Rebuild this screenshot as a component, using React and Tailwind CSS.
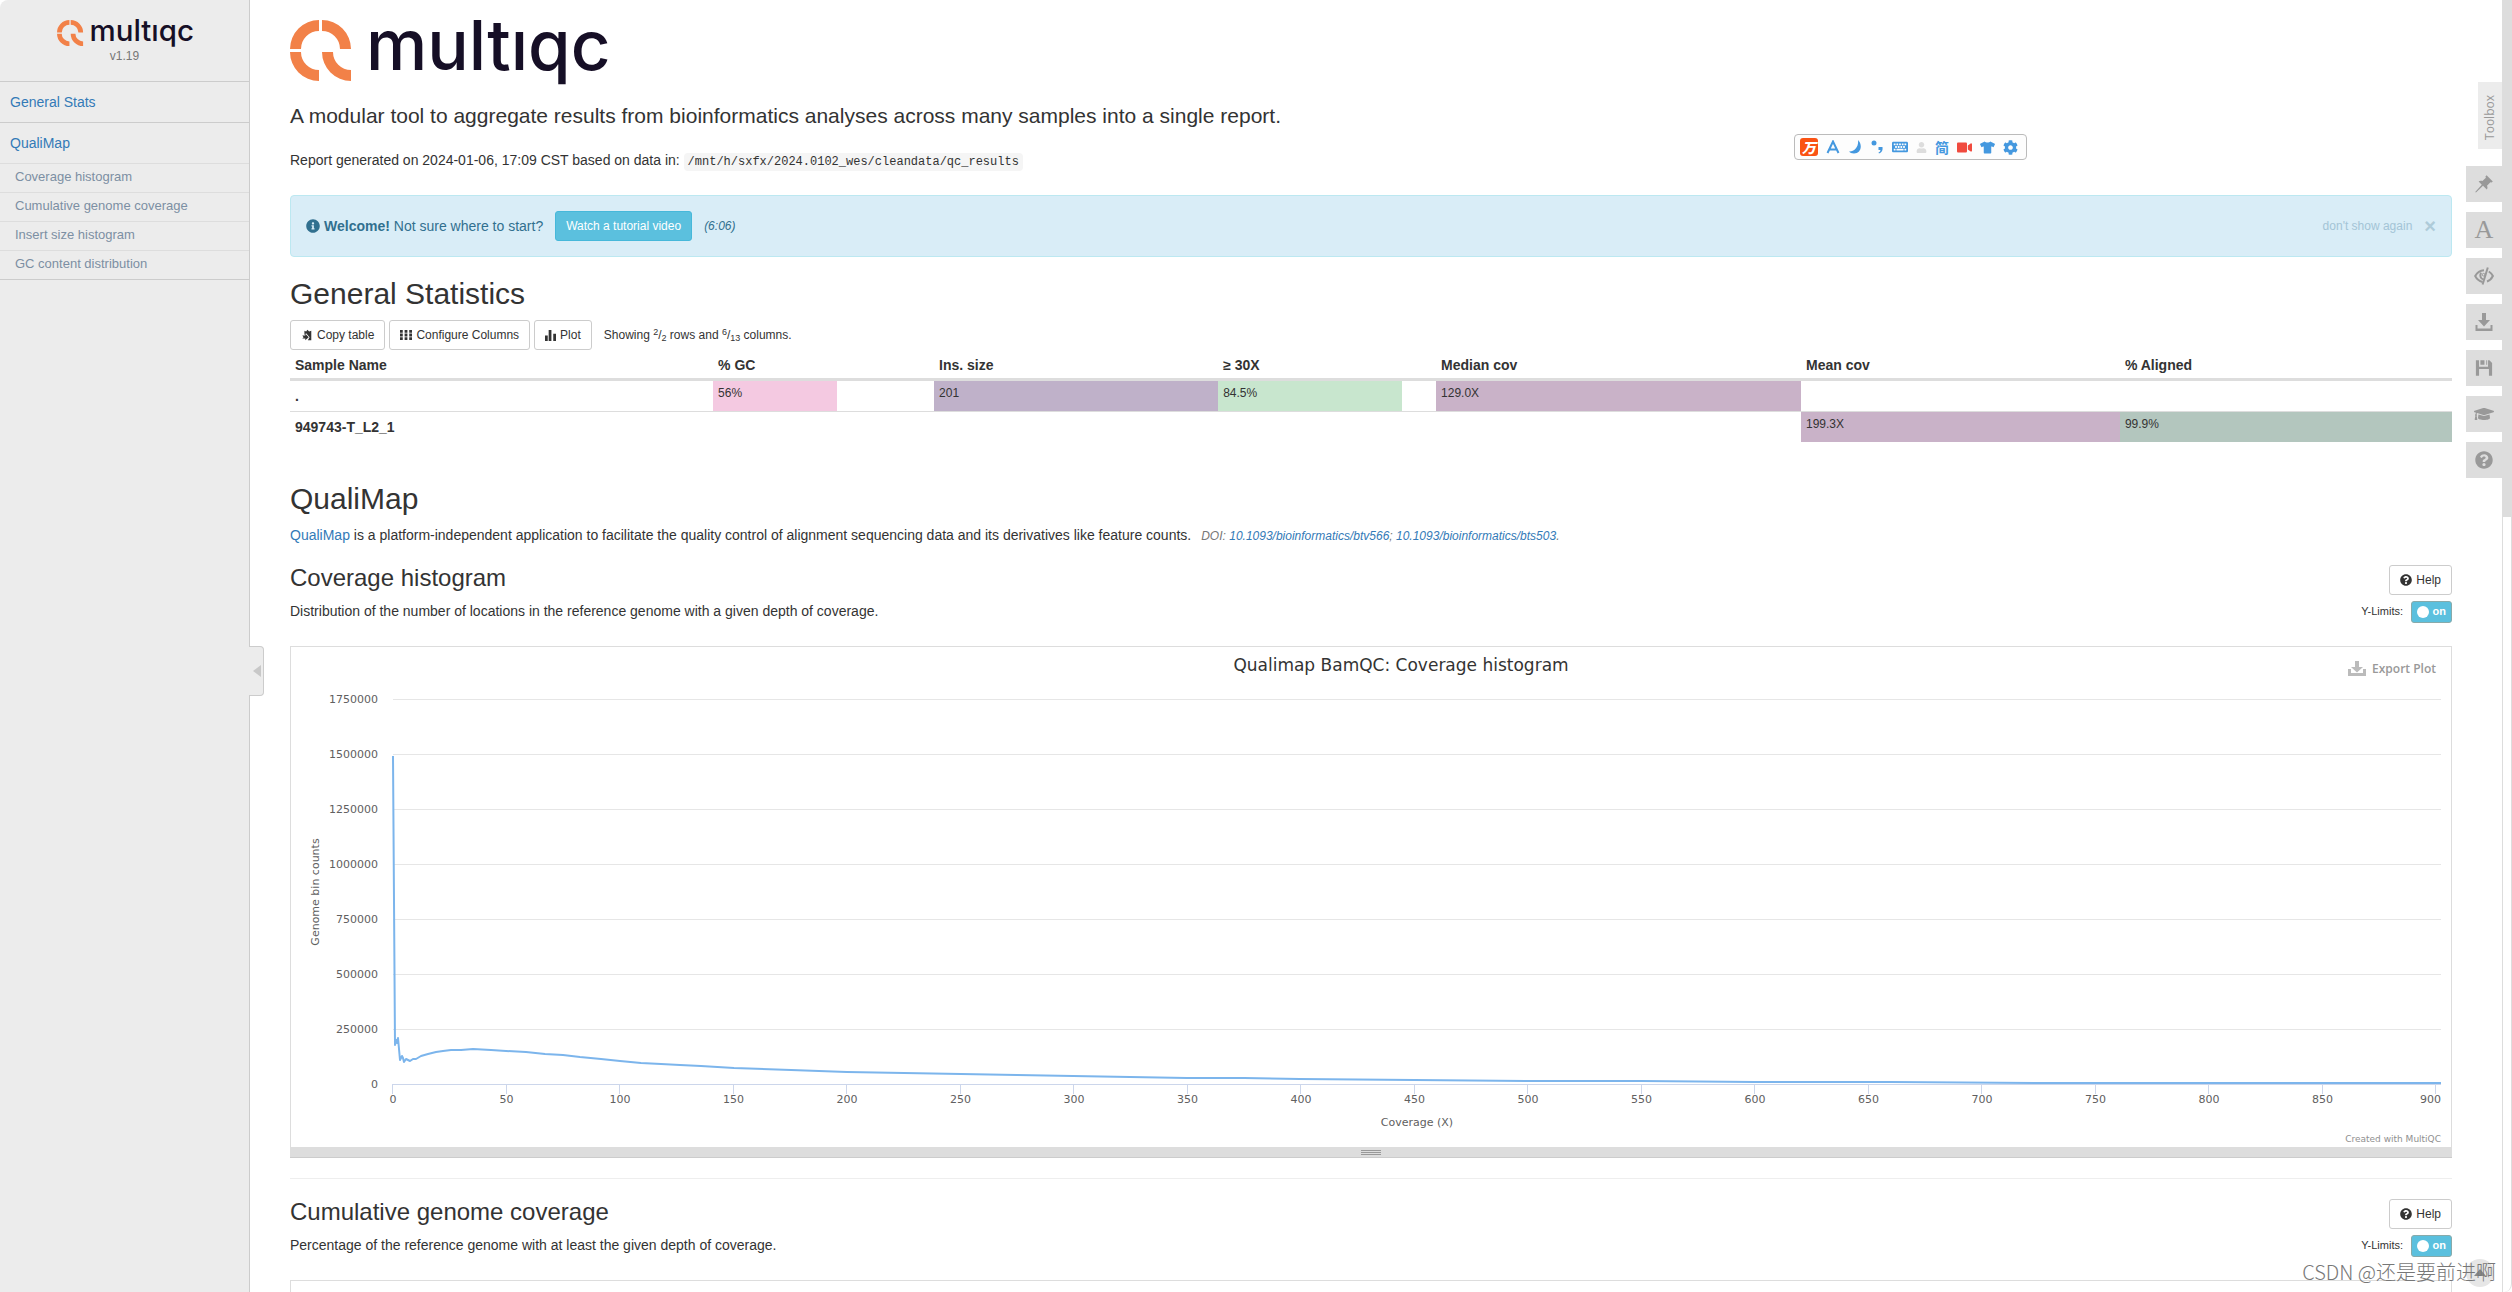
import React, { useState } from 'react';
import { FaInfoCircle, FaQuestionCircle, FaGraduationCap, FaTshirt, FaUser, FaKeyboard, FaVideo, FaCog } from 'react-icons/fa';

const navItems = ['Coverage histogram', 'Cumulative genome coverage', 'Insert size histogram', 'GC content distribution'];

const columns = [
  { title: 'Sample Name', width: '19.57%' },
  { title: '% GC', width: '10.22%' },
  { title: 'Ins. size', width: '13.14%' },
  { title: '≥ 30X', width: '10.08%' },
  { title: 'Median cov', width: '16.88%' },
  { title: 'Mean cov', width: '14.75%' },
  { title: '% Aligned', width: '15.36%' },
];

const rows = [
  {
    name: '.',
    cells: [
      { text: '56%', bar: 56, color: 'bg-[#f4c9e1]' },
      { text: '201', bar: 100, color: 'bg-[#bfb1c9]' },
      { text: '84.5%', bar: 84.5, color: 'bg-[#c8e6ce]' },
      { text: '129.0X', bar: 100, color: 'bg-[#c9b2c8]' },
      null,
      null,
    ],
  },
  {
    name: '949743-T_L2_1',
    cells: [
      null,
      null,
      null,
      null,
      { text: '199.3X', bar: 100, color: 'bg-[#c9b2c8]' },
      { text: '99.9%', bar: 100, color: 'bg-[#b3c6be]' },
    ],
  },
];

// points of the coverage line, in chart units
const coverageLine =
  '102,109 104,398 105,393 106,396 107,391 109,413 111,409 112,411 113,415 115,412 117,413 119,414 122,412 125,412 130,409 137,407 145,405 152,404 160,403 170,403 182,402 200,403 215,404 235,405 254,407 272,408 289,410 310,412 329,414 350,416 370,417 389,418 410,419 443,421 500,423 556,425 613,426 670,427 726,428 782,429 839,430 896,431 953,431 1009,432 1123,433 1236,434 1350,434 1463,435 1600,435 1750,436 1950,436 2150,436';

const yTicks = [1750000, 1500000, 1250000, 1000000, 750000, 500000, 250000, 0];
const xTicks = Array.from({ length: 19 }, (_, i) => i * 50);

const Logo = ({ className }) => (
  <svg viewBox="0 0 318 61" className={`overflow-visible ${className}`} role="img" aria-label="multiqc">
    <g fill="#f28148">
      <path d="M0 29A29 29 0 0 1 29 0V11A18 18 0 0 0 11 29Z" />
      <path d="M32 0A29 29 0 0 1 61 29H50A18 18 0 0 0 32 11Z" />
      <path d="M0 32A29 29 0 0 0 29 61V50A18 18 0 0 1 11 32Z" />
      <path d="M32 32H43A18 18 0 0 0 61 50V61A29 29 0 0 1 32 32Z" />
    </g>
    <text x="76" y="50" fontSize="69" fontWeight="500" fill="#160f26" className="font-['Inter',sans-serif]">
      multıqc
    </text>
  </svg>
);

const PinIcon = ({ className }) => (
  <svg viewBox="0 0 20 20" className={className} fill="currentColor">
    <path d="M12.6 1.2L18.8 7.4L17.6 8.6L16.4 8.2L13 11.8C13.8 13.4 13.6 14.6 12.8 15.4L9 11.8L2 18.6L1.2 18L7.8 10.8L4.6 7.4C5.6 6.6 7 6.4 8.4 7L11.9 3.7L11.4 2.4Z" />
  </svg>
);

const EyeCloseIcon = ({ className }) => (
  <svg viewBox="0 0 20 20" className={className} fill="none" stroke="currentColor" strokeWidth="2">
    <path d="M8.5 16C5 15 2.5 12.6 1.2 10C3 6.5 6 4.3 10 4.2" />
    <path d="M14.8 5.5C16.8 6.8 18 8.3 18.9 10C17.6 12.6 15.6 14.6 13 15.5" />
    <path d="M9.6 13.5C6.5 13 5.6 9.5 7 6.6" />
    <circle cx="9.6" cy="8.7" r="1.3" strokeWidth="1" />
    <path d="M13.8 1.5L8.6 18.5" />
  </svg>
);

const SaveTrayIcon = ({ className }) => (
  <svg viewBox="0 0 20 20" className={className} fill="currentColor">
    <path d="M8 1H12V8H16L10 14.5L4 8H8Z" />
    <path d="M1.5 13H3.5V16.5H16.5V13H18.5V19H1.5Z" />
  </svg>
);

const ExportIcon = ({ className }) => (
  <svg viewBox="0 0 18 16" className={className} fill="currentColor">
    <path d="M7 0H11V6H15L9 11.5L3 6H7Z" />
    <path d="M0 8H3V12H15V8H18V15H0Z" />
  </svg>
);

const FloppyIcon = ({ className }) => (
  <svg viewBox="0 0 20 20" className={className} fill="currentColor">
    <path d="M1 1.5H4.5V8.5H14.5V1.5H16L19 4.5V18.5H15.5V11H4.5V18.5H1Z" />
    <path d="M6 1.5H10.5V6.5H6ZM12.5 1.5H13.5V6.5H12.5Z" />
  </svg>
);

const CopyIcon = ({ className }) => (
  <svg viewBox="0 0 14 14" className={className} fill="currentColor">
    <path d="M4 2L6 3L7.5 1L9.5 3L12 2V13H8L10 9.5L6 5L4 7Z" />
    <path d="M1.5 7.5H5V5.5L9 9.5L5 13V11H1.5L3 9.5Z" />
  </svg>
);

const GridIcon = ({ className }) => (
  <svg viewBox="0 0 13 13" className={className} fill="currentColor">
    <path d="M0 1H3V4H0ZM5 1H8V4H5ZM10 1H13V4H10ZM0 5H3V8H0ZM5 5H8V8H5ZM10 5H13V8H10ZM0 9H3V12H0ZM5 9H8V12H5ZM10 9H13V12H10Z" />
  </svg>
);

const StatsIcon = ({ className }) => (
  <svg viewBox="0 0 12 12" className={className} fill="currentColor">
    <path d="M0 6H3V12H0ZM4 0H7V12H4ZM9 4H12V12H9Z" />
  </svg>
);

const toolbox = [
  { label: 'Highlight samples', icon: <PinIcon className="size-5" /> },
  { label: 'Rename samples', icon: <span className="font-['Liberation_Serif',serif] text-[26px] leading-9">A</span> },
  { label: 'Hide samples', icon: <EyeCloseIcon className="size-5" /> },
  { label: 'Export plots', icon: <SaveTrayIcon className="size-5" /> },
  { label: 'Save settings', icon: <FloppyIcon className="size-[18px]" /> },
  { label: 'Tutorial', icon: <FaGraduationCap className="size-5" /> },
  { label: 'About', icon: <FaQuestionCircle className="size-[18px]" /> },
];

const SmallButton = ({ children }) => (
  <button
    type="button"
    className="flex h-[30px] items-center gap-1 rounded-[3px] border border-[#ccc] bg-white px-2.5 text-xs text-[#333] cursor-pointer hover:bg-gray-100"
  >
    {children}
  </button>
);

const PlotSection = ({ title, description, children }) => {
  const [limits, setLimits] = useState(true);

  return (
    <section className="mt-5">
      <div className="flex justify-between">
        <div>
          <h3 className="text-2xl leading-[26px]">{title}</h3>
          <p className="mt-2.5 leading-5">{description}</p>
        </div>
        <div className="flex flex-col items-end gap-1.5">
          <SmallButton>
            <FaQuestionCircle className="size-3" />
            Help
          </SmallButton>
          <div className="flex items-center gap-2 text-[11px]">
            <span>Y-Limits:</span>
            <button
              type="button"
              role="switch"
              aria-checked={limits}
              aria-label="Y-Limits"
              onClick={() => setLimits(!limits)}
              className="flex h-[22px] w-[41px] items-center gap-1 rounded-[3px] border border-[#8aa] bg-[#5bc0de] px-[5px] font-bold text-white cursor-pointer"
            >
              <span className="size-3 rounded-full bg-white"></span>
              {limits ? 'on' : 'off'}
            </button>
          </div>
        </div>
      </div>
      {children}
    </section>
  );
};

const CoverageChart = () => (
  <svg viewBox="0 0 2160 500" className="block w-full font-['DejaVu_Sans',sans-serif]" fontSize="11" fill="#606060">
    <text x="1110" y="24" textAnchor="middle" fontSize="17" fill="#333">
      Qualimap BamQC: Coverage histogram
    </text>
    {yTicks.map((tick, i) => (
      <g key={tick}>
        {tick > 0 && <path d={`M102 ${52.5 + i * 55}H2150`} stroke="#e6e6e6" />}
        <text x="87" y={56 + i * 55} textAnchor="end">
          {tick}
        </text>
      </g>
    ))}
    <path d="M101 437.5H2150" stroke="#ccd6eb" />
    {xTicks.map((tick, i) => (
      <g key={tick}>
        <path d={`M${Math.round(101 + i * 113.5) + 0.5} 437V447`} stroke="#ccd6eb" />
        <text x={tick === 900 ? 2150 : 102 + i * 113.5} y="456" textAnchor={tick === 900 ? 'end' : 'middle'}>
          {tick}
        </text>
      </g>
    ))}
    <polyline points={coverageLine} fill="none" stroke="#7cb5ec" strokeWidth="2" strokeLinejoin="round" />
    <text x="1126" y="479" textAnchor="middle">
      Coverage (X)
    </text>
    <text transform="translate(28 245) rotate(-90)" textAnchor="middle">
      Genome bin counts
    </text>
    <text x="2150" y="495" textAnchor="end" fontSize="9" fill="#909090">
      Created with MultiQC
    </text>
  </svg>
);

const ImeBar = () => (
  <div className="absolute left-[1794px] top-[134px] flex h-[26px] items-center gap-2 rounded border border-[#bbb] bg-[#fdfdfd] pr-2 pl-[5px] text-[#4498df]">
    <span className="flex size-[18px] items-center justify-center rounded-[3px] bg-[#fa5314] text-sm font-black text-white italic font-['Noto_Sans_CJK_SC',sans-serif]">
      万
    </span>
    <svg viewBox="0 0 14 14" className="size-3.5" fill="none" stroke="currentColor" strokeWidth="2">
      <path d="M1.5 13L7 1.5L12.5 13M3.5 9.5H10.5" />
    </svg>
    <svg viewBox="0 0 14 14" className="size-3.5" fill="currentColor">
      <path d="M10 0C15 5 13 13.5 6 13.5C3.5 13.5 2 12.8 1 11.5C6 12 11 7 10 0Z" />
    </svg>
    <svg viewBox="0 0 14 14" className="size-3.5" fill="currentColor">
      <circle cx="4" cy="3" r="2.5" />
      <path d="M8.5 7H12.5C13 10 12 12.5 9 13.5L8.5 12.5C10 12 10.4 11 10.4 10H8.5Z" />
    </svg>
    <FaKeyboard className="size-4" />
    <FaUser className="size-[11px] text-[#ddd]" />
    <span className="text-sm font-bold font-['Noto_Sans_CJK_SC',sans-serif]">简</span>
    <FaVideo className="size-[15px] text-[#f04a3e]" />
    <FaTshirt className="size-[15px]" />
    <FaCog className="size-[15px]" />
  </div>
);

const App = () => {
  return (
    <div className="relative flex h-screen overflow-hidden bg-white text-sm text-[#333] font-['Liberation_Sans',Arial,sans-serif]">
      {/* side navigation */}
      <aside className="relative w-[250px] shrink-0 rounded-tl-lg border-r border-[#ccc] bg-[#ececec]">
        <div className="flex h-[82px] flex-col items-center border-b border-[#ccc] pt-5">
          <Logo className="w-[136px]" />
          <p className="mt-0.5 text-xs leading-[17px] text-[#777]">v1.19</p>
        </div>
        <nav>
          <a href="#general_stats" className="block border-b border-[#ccc] px-2.5 py-2.5 leading-5 text-[#337ab7]">
            General Stats
          </a>
          <a href="#qualimap" className="block border-b border-[#ddd] px-2.5 py-2.5 leading-5 text-[#337ab7]">
            QualiMap
          </a>
          <ul className="border-b border-[#ccc]">
            {navItems.map((item, index) => (
              <li key={item} className={index > 0 ? 'border-t border-[#ddd]' : ''}>
                <a href="#qualimap" className="block px-[15px] pt-1 pb-1.5 text-[13px] leading-[18px] text-[#7c8fa3]">
                  {item}
                </a>
              </li>
            ))}
          </ul>
        </nav>
        <button
          type="button"
          aria-label="Hide navigation"
          className="absolute top-1/2 -right-[15px] flex h-[50px] w-[15px] items-center rounded-r border border-l-0 border-[#ccc] bg-[#ececec] pl-1 cursor-pointer"
        >
          <svg viewBox="0 0 8 12" className="h-3 w-2" fill="#c8c8c8">
            <path d="M0 6L8 0V12Z" />
          </svg>
        </button>
      </aside>

      <main className="min-w-0 flex-1 pt-5 pr-[50px] pl-10">
        {/* report header */}
        <header>
          <h1>
            <Logo className="w-[318px]" />
          </h1>
          <p className="mt-[21px] text-[21px] leading-7">
            A modular tool to aggregate results from bioinformatics analyses across many samples into a single report.
          </p>
          <p className="mt-5 leading-5">
            Report generated on 2024-01-06, 17:09 CST based on data in:{' '}
            <code className="rounded bg-[#f5f5f5] px-1 py-0.5 text-xs font-['Liberation_Mono',monospace]">
              /mnt/h/sxfx/2024.0102_wes/cleandata/qc_results
            </code>
          </p>
        </header>

        {/* welcome alert */}
        <div className="mt-[25px] flex h-[62px] items-center rounded border border-[#bce8f1] bg-[#d9edf7] px-[15px] text-[#31708f]">
          <FaInfoCircle className="mr-1 size-3.5" />
          <p>
            <strong>Welcome!</strong> Not sure where to start?
          </p>
          <button
            type="button"
            className="ml-3 h-[30px] rounded-[3px] border border-[#46b8da] bg-[#5bc0de] px-2.5 text-xs text-white cursor-pointer"
          >
            Watch a tutorial video
          </button>
          <em className="ml-3 text-xs">(6:06)</em>
          <button type="button" className="ml-auto text-xs text-[#a3c4d6] cursor-pointer">
            don't show again
          </button>
          <button type="button" aria-label="Close" className="ml-3 text-xl font-bold leading-5 text-[#aecbd9] cursor-pointer">
            ×
          </button>
        </div>

        {/* general statistics */}
        <section id="general_stats" className="mt-5">
          <h2 className="text-3xl leading-[33px]">General Statistics</h2>
          <div className="mt-2.5 flex items-center gap-1">
            <SmallButton>
              <CopyIcon className="size-3" />
              Copy table
            </SmallButton>
            <SmallButton>
              <GridIcon className="size-3" />
              Configure Columns
            </SmallButton>
            <SmallButton>
              <StatsIcon className="size-[11px]" />
              Plot
            </SmallButton>
            <p className="ml-2 text-xs">
              Showing <sup>2</sup>/<sub>2</sub> rows and <sup>6</sup>/<sub>13</sub> columns.
            </p>
          </div>
          <table className="w-full table-fixed border-separate border-spacing-0">
            <thead>
              <tr>
                {columns.map((col) => (
                  <th
                    key={col.title}
                    style={{ width: col.width }}
                    className="border-b-3 border-[#ddd] px-[5px] pt-[5px] pb-[3px] text-left leading-5"
                  >
                    {col.title}
                  </th>
                ))}
              </tr>
            </thead>
            <tbody>
              {rows.map((row, index) => (
                <tr key={row.name}>
                  <th
                    className={`h-[30px] px-[5px] pt-[5px] text-left align-top leading-5 ${
                      index === 0 && 'border-b border-[#ddd]'
                    }`}
                  >
                    {row.name}
                  </th>
                  {row.cells.map((cell, i) => (
                    <td key={i} className={`p-0 align-top ${index === 0 && 'border-b border-[#ddd]'}`}>
                      {cell && (
                        <div
                          style={{ width: `${cell.bar}%` }}
                          className={`h-[30px] px-[5px] pt-1 text-xs leading-[17px] ${cell.color}`}
                        >
                          {cell.text}
                        </div>
                      )}
                    </td>
                  ))}
                </tr>
              ))}
            </tbody>
          </table>
        </section>

        {/* qualimap module */}
        <section id="qualimap" className="mt-10">
          <h2 className="text-3xl leading-[33px]">QualiMap</h2>
          <p className="mt-2.5 leading-5">
            <a href="#qualimap" className="text-[#337ab7]">QualiMap</a> is a platform-independent application to facilitate
            the quality control of alignment sequencing data and its derivatives like feature counts.
            <em className="ml-2.5 text-xs text-[#777]">
              DOI: <a href="#btv566" className="text-[#337ab7]">10.1093/bioinformatics/btv566</a>;{' '}
              <a href="#bts503" className="text-[#337ab7]">10.1093/bioinformatics/bts503</a>.
            </em>
          </p>

          <PlotSection
            title="Coverage histogram"
            description="Distribution of the number of locations in the reference genome with a given depth of coverage."
          >
            <div className="relative mt-[23px] border border-b-0 border-[#ddd]">
              <CoverageChart />
              <button
                type="button"
                className="absolute top-3.5 right-[15px] flex items-center gap-1.5 text-xs font-semibold text-[#999] cursor-pointer font-['Open_Sans',sans-serif]"
              >
                <ExportIcon className="h-4 w-[18px] text-[#bbb]" />
                Export Plot
              </button>
            </div>
            <div className="flex h-[11px] flex-col items-center justify-center gap-px border-b border-[#ccc] bg-[#ddd]">
              <span className="h-px w-5 bg-[#999]"></span>
              <span className="h-px w-5 bg-[#999]"></span>
              <span className="h-px w-5 bg-[#999]"></span>
            </div>
          </PlotSection>

          <hr className="mt-5 border-[#eee]" />

          <PlotSection
            title="Cumulative genome coverage"
            description="Percentage of the reference genome with at least the given depth of coverage."
          >
            <div className="mt-[23px] h-[500px] border border-[#ddd]"></div>
          </PlotSection>
        </section>
      </main>

      {/* scroll rail */}
      <div className="w-2.5 shrink-0 rounded-br-lg border-x border-[#ddd] bg-white">
        <div className="h-[40%] bg-[#ddd]"></div>
      </div>

      {/* toolbox tabs */}
      <div className="absolute top-[82px] right-2.5 flex flex-col items-end gap-2.5 text-[#999]">
        <button
          type="button"
          className="mb-[7px] flex h-[67px] w-6 items-center justify-center bg-[#ececec] pt-1 text-xs cursor-pointer [writing-mode:vertical-rl] font-['Open_Sans',sans-serif]"
        >
          <span className="rotate-180">Toolbox</span>
        </button>
        {toolbox.map((tool) => (
          <button
            key={tool.label}
            type="button"
            aria-label={tool.label}
            className="flex size-9 items-center justify-center bg-[#ddd] cursor-pointer"
          >
            {tool.icon}
          </button>
        ))}
      </div>

      <ImeBar />

      <button
        type="button"
        aria-label="Back to top"
        className="absolute right-[18px] bottom-[5px] flex size-7 items-center justify-center rounded-full bg-[#e6e6e6] text-[#888]"
      >
        <svg viewBox="0 0 12 8" className="h-2 w-3" fill="currentColor">
          <path d="M6 0L12 7H0Z" />
        </svg>
      </button>
      <p className="absolute right-4 bottom-1.5 text-xl leading-7 font-light text-[#777] font-['Noto_Sans_CJK_SC',sans-serif]">
        CSDN @还是要前进啊
      </p>
    </div>
  );
};

export default App;
